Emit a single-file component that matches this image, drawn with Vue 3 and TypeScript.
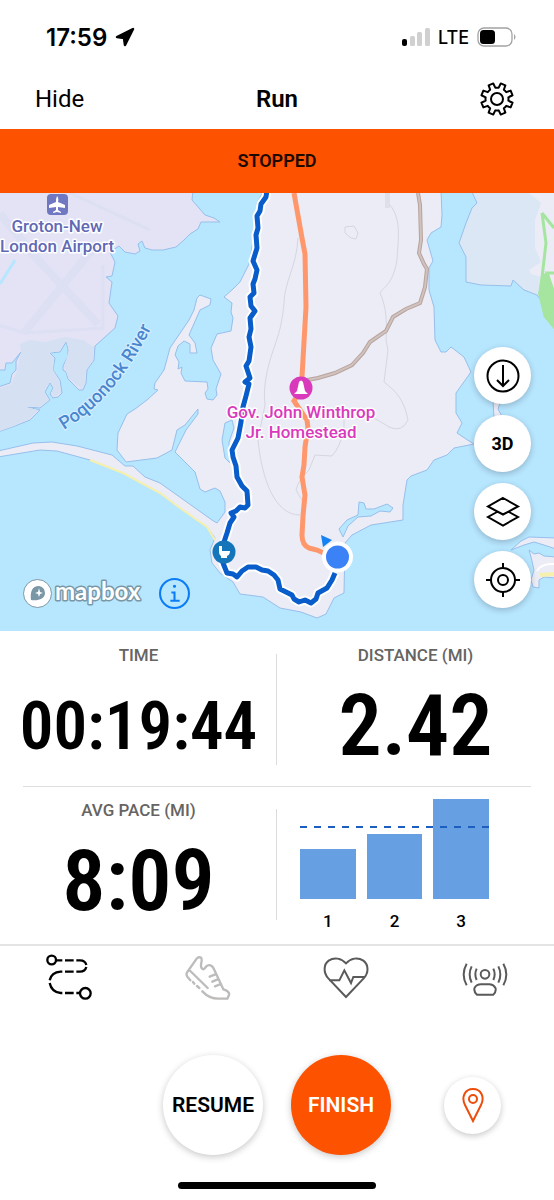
<script setup lang="ts">
interface Split {
  mile: number
  height: number
}

const splits: Split[] = [
  { mile: 1, height: 50 },
  { mile: 2, height: 65 },
  { mile: 3, height: 100 },
]

function gearPath(teeth: number, outer: number, root: number): string {
  const point = (radius: number, degrees: number): string => {
    const a = (degrees * Math.PI) / 180
    return `${(radius * Math.sin(a)).toFixed(2)} ${(-radius * Math.cos(a)).toFixed(2)}`
  }
  const step = 360 / teeth
  const parts: string[] = []
  for (let i = 0; i < teeth; i++) {
    const a = step / 2 + i * step
    parts.push(
      `${i ? `A${root} ${root} 0 0 1 ` : 'M'}${point(root, a - 14)}`,
      `L${point(outer, a - 9)}`,
      `L${point(outer, a + 9)}`,
      `L${point(root, a + 14)}`,
    )
  }
  return parts.join(' ') + 'Z'
}

const gear = gearPath(8, 16, 11.5)
</script>

<template>
  <main class="screen">
    <div class="status">
      <div class="status-side">
        <span class="clock">17:59</span>
        <svg class="arrow" viewBox="0 0 20 20" aria-hidden="true">
          <path d="M18 2L10 18L9 11L2 10Z" fill="#000" stroke="#000" stroke-width="2.500" stroke-linejoin="round" />
        </svg>
      </div>
      <div class="status-side">
        <svg class="signal" viewBox="0 0 28 18" aria-hidden="true">
          <rect x="0" y="11" width="5" height="7" rx="2" fill="#000" />
          <rect x="8" y="8" width="5" height="10" rx="1.500" fill="#d0d0d0" />
          <rect x="15" y="4" width="5" height="14" rx="1.500" fill="#d0d0d0" />
          <rect x="23" y="0" width="5" height="18" rx="1.500" fill="#d0d0d0" />
        </svg>
        <span class="network">LTE</span>
        <svg class="battery" viewBox="0 0 40 20" aria-hidden="true">
          <rect x="1" y="1" width="34" height="18" rx="6" fill="none" stroke="#a3a3a3" stroke-width="1.300" />
          <rect x="3" y="3" width="15" height="14" rx="3.500" fill="#000" />
          <path d="M37 7 Q40 10 37 13Z" fill="#a3a3a3" />
        </svg>
      </div>
    </div>

    <header class="nav">
      <button class="hide">Hide</button>
      <h1>Run</h1>
      <button class="settings" aria-label="Settings">
        <svg viewBox="-18 -18 36 36" fill="none" stroke="#000" stroke-width="2" stroke-linejoin="round">
          <path :d="gear" />
          <circle r="6" />
        </svg>
      </button>
    </header>

    <div class="banner" role="status">STOPPED</div>

    <section class="map" aria-label="Map">
      <svg class="canvas" viewBox="0 193 554 438" preserveAspectRatio="xMidYMid slice">
        <rect x="0" y="193" width="554" height="438" fill="#b7e6ff" />
        <g stroke="#97bfec" stroke-width="1" stroke-linejoin="round">
          <path fill="#e4e3f6" d="M-2 190H193L192 200L199 208L205 215L214 218L220 222L210 222L201 222L198 229L190 234L184 240L176 247L163 250L152 250L145 248L142 241L138 244L140 251L135 254L125 252L119 246L110 252L115 262L112 276L106 277L112 282L109 303L118 316L115 328L95 346L94 360L87 370L86 383L83 390L79 390L68 379L66 372L63 370L63 366L68 356L68 349L66 342L60 352L50 353L55 358L53 370L60 380L62 393L58 397L53 398L50 394L53 388L50 383L45 392L50 400L40 408L27 407L40 410L30 420L15 426L-2 432V387L10 383L12 374L16 370L16 361L21 352L12 363L6 363L5 370L-2 370Z" />
          <path fill="#ebecf5" d="M264 190L257 203L255 230L249 264L240 282L233 289L224 297L232 303L231 312L233 318L231 331L217 334L211 348L213 360L221 374L216 389L217 395L213 400L207 399L205 393L208 389L207 382L185 381L181 373L182 367L178 369L179 362L175 355L178 346L184 341L190 344L190 353L197 353L195 343L189 335L200 310L210 305L211 299L200 295L197 298L194 310L189 320L170 348L164 370L155 383L154 389L158 390L147 400L135 409L127 414L118 433L117 450L126 462L157 458L172 450L177 430L185 425L198 409L198 414L186 430L175 452L195 472L200 489L205 492L215 488L220 491L225 502L225 512L217 523L212 520L160 483L145 477L133 466L125 466L112 455L77 446L52 442L33 443L-2 451V457L40 450L57 451L90 460L123 473L160 493L180 508L207 527L215 538L210 550L212 563L220 573L233 582L240 594L263 597L280 608L301 612L317 618L326 614L334 598L344 593L345 543L352 535L371 525L403 520L403 505L407 480L411 476L427 470L434 460L447 455L454 448L474 444L466 439L457 433L462 423L456 413V393L471 372L464 357L451 347L446 352L441 352L435 340L434 307L429 290V268L433 261L427 240L431 233L441 227L442 215L441 190Z" />
          <path fill="#dbe7f4" d="M471 190L477 203L472 208L466 223L459 243L466 257V282L481 285L511 286L513 280L524 290L537 295L543 303L545 317L556 330V190Z" />
          <path fill="#ebecf5" d="M493 400H501L498 409L503 418H494Z" />
          <path fill="#ebecf5" d="M511 550L521 541L529 537L556 538V549L544 545L534 542L524 545Z" />
          <path fill="#ebecf5" d="M529 550L534 554L539 553L544 556L556 557V578L544 577L539 580V588L533 587L531 580L534 570L531 557Z" />
        </g>
        <path fill="#ebecf5" d="M529 193L541 203L535 220V248L541 262L529 270L531 274L542 277L539 292L544 301L546 316L555 328V193Z" />
        <path fill="#d5e1f3" d="M21 352L20 344L30 340L45 342L65 337L83 340L94 347L93 361L86 370L85 383L82 389L69 379L64 367L69 350L66 341L59 351L49 353L54 358L53 370L59 380L61 393L54 397L51 393L54 388L50 382L44 392L49 400L40 407L26 407L38 410L29 419L14 426L0 431V388L11 384L17 371Z" />

        <g fill="none" stroke="#dddff3" stroke-width="8">
          <path d="M95 246L24 333M25 246L98 324M0 214L40 262" />
          <path d="M-2 325L25 333L103 328V265M70 193L150 230" stroke-width="3" />
          <path d="M15 260L0 284" stroke="#b7e6ff" stroke-width="3" />
        </g>

        <path d="M542 213L546 243L540 295L545 316L554 327V293L547 273H554M542 213L554 228" fill="none" stroke="#a5e5a0" stroke-width="3" />
        <path d="M542 273L549 274L554 293V328L545 317L543 302L538 294Z" fill="#a5e5a0" />
        <path d="M90 460L123 473L160 493L180 508L207 527L215 540" fill="none" stroke="#f6f0ae" stroke-width="2" />
        <path d="M537 571Q541 563 554 564" fill="none" stroke="#fff" stroke-width="2" />
        <path d="M540 575L554 574" fill="none" stroke="#f6f0ae" stroke-width="4" />

        <g fill="#b7e6ff" stroke="#97bfec" stroke-width="1">
          <path d="M225 423L232 420L234 428L229 442L230 463L225 458L222 440Z" />
          <path d="M339 529L347 520L358 515L359 502L364 503L366 509L374 509L387 504L393 508L390 512L380 511L371 516L358 517L348 526L343 537Z" />
        </g>

        <g fill="none" stroke="#d5d6df" stroke-width="1">
          <path d="M298 238C297 265 284 283 284 303C282 325 279 333 274 348C266 370 263 390 265 405L258 440C262 480 275 515 300 515" />
          <path d="M390 205C402 220 398 240 397 260C393 285 383 287 380 293C387 308 387 325 386 340L388 350L384 382C397 392 404 400 408 420Q402 433 389 427C375 418 360 410 344 408L344 430Q340 447 332 456L315 455L309 470Q298 480 296 490L303 502" />
          <path d="M345 227L354 226L358 233L356 239L351 238L345 233Z" />
        </g>
        <rect x="385" y="193" width="5" height="15" fill="#dedfe9" />

        <path class="trail-edge" d="M418 193L420 205L421 240L419 253L424 264L427 269L425 287L420 303L406 309L393 317L386 331L370 342L363 353L352 365L335 373L318 378L302 381" />
        <path class="trail" d="M418 193L420 205L421 240L419 253L424 264L427 269L425 287L420 303L406 309L393 317L386 331L370 342L363 353L352 365L335 373L318 378L302 381" />

        <path d="M294 193L302 238L305 254L306 307L302 377V388L294 401L298 407L307 420L308 428L305 447L304 465L302 477L305 495L303 516L302 535Q302 545 309 548L317 550L328 555" fill="none" stroke="#ff976d" stroke-width="5" />

        <g fill="none" stroke-linejoin="round">
          <path v-for="layer in ['halo', 'route']" :key="layer" :class="layer" d="M267 190L266 197L261 204L260 211L257 216L258 228L256 235L257 248L253 261L257 270L255 279L253 284L254 293L250 297L251 306L255 311L250 318L251 329L249 337L251 347L249 361L246 366L250 378L245 382L249 384L246 396L243 407L241 422L238 438L232 450L233 457L236 466L237 477L242 486L247 491L248 505L245 508L240 507L236 511L231 513L234 517L230 523L227 533L224 542V552L223 563L227 573L233 574L237 577L242 571L248 567L256 567L262 570L268 571L274 575L278 580L280 589L286 592L292 595L294 599L299 602L305 600L311 603L316 599L318 593L327 588L332 580L335 573" />
        </g>

        <g class="airport">
          <rect x="47" y="194" width="21" height="21" rx="4" />
          <path d="M57 196Q59 198 58 202L65 205V208L58 207V210L61 212V213L57 212L53 213V212L56 210V207L49 208V205L56 202Q56 198 57 196Z" fill="#fff" />
        </g>
        <g class="place airport-label">
          <text x="57" y="232">Groton-New</text>
          <text x="57" y="252">London Airport</text>
        </g>

        <path id="river-line" d="M64 430Q120 396 157 316" fill="none" />
        <text class="river"><textPath href="#river-line">Poquonock River</textPath></text>

        <circle cx="301" cy="388" r="11.500" fill="#d93abc" />
        <path d="M299 382Q301 379 303 382L305 391L308 394H294L297 391Z" fill="#fff" />
        <g class="place homestead">
          <text x="301" y="418">Gov. John Winthrop</text>
          <text x="301" y="438">Jr. Homestead</text>
        </g>

        <circle cx="224" cy="552" r="11.500" fill="#1575bb" />
        <path d="M219 546H222V551H230Q230 555 227 556V558H221V556Q219 555 219 551Z" fill="#fff" />

        <path d="M321 535L332 540L323 547Z" fill="#1683f5" />
        <circle cx="337.500" cy="557" r="15.500" fill="#fff" />
        <circle cx="337.500" cy="557" r="11.500" fill="#3c82f7" />

        <g class="mapbox">
          <circle cx="37.500" cy="593.500" r="14" fill="#fff" stroke="#7a97a5" stroke-width="1" />
          <path d="M31 600C30 592 32 586 39 586A7 7 0 0 1 45 593C45 599 38 601 31 600Z" fill="#7a97a5" />
          <path d="M39 588L40 592L43 593L40 594L39 597L38 594L35 593L38 592Z" fill="#fff" />
          <text x="55" y="600">mapbox</text>
        </g>
      </svg>

      <a class="info" href="#attribution" aria-label="Map attribution">
        <svg viewBox="0 0 30 30" fill="none" stroke="#0a7cf5" stroke-width="2">
          <circle cx="15" cy="15" r="14" />
          <path d="M12 14H15V22M11 22H20" />
          <circle cx="15" cy="8" r="1" fill="#0a7cf5" stroke-width="1" />
        </svg>
      </a>

      <div class="tools">
        <button class="round" aria-label="Download map">
          <svg viewBox="0 0 36 36">
            <circle cx="18" cy="18" r="15.500" />
            <path d="M18 7V28M12 22L18 28L24 22" />
          </svg>
        </button>
        <button class="round">3D</button>
        <button class="round" aria-label="Map layers">
          <svg viewBox="0 0 36 36">
            <path d="M18 4L33 12.500L18 20.500L3 12.500ZM12 18L3 23L18 31.500L33 23L24 18" />
          </svg>
        </button>
        <button class="round" aria-label="Center on location">
          <svg viewBox="0 0 36 36">
            <circle cx="18" cy="18" r="12" />
            <circle cx="18" cy="18" r="5" />
            <path d="M18 1V6M18 30V35M1 18H6M30 18H35" />
          </svg>
        </button>
      </div>
    </section>

    <section class="stats" aria-label="Run stats">
      <div class="row">
        <div class="stat">
          <h2>TIME</h2>
          <p class="value time">00:19:44</p>
        </div>
        <div class="stat">
          <h2>DISTANCE (MI)</h2>
          <p class="value">2.42</p>
        </div>
      </div>
      <div class="row">
        <div class="stat">
          <h2>AVG PACE (MI)</h2>
          <p class="value">8:09</p>
        </div>
        <div class="chart" role="group" aria-label="Pace per mile">
          <div class="bars">
            <div v-for="split in splits" :key="split.mile" class="bar" :style="{ height: split.height + '%' }"></div>
            <svg class="average" aria-hidden="true">
              <line x1="0" y1="1" x2="100%" y2="1" stroke="#1c5fc0" stroke-width="2" stroke-dasharray="7 7" />
            </svg>
          </div>
          <div class="miles">
            <span v-for="split in splits" :key="split.mile">{{ split.mile }}</span>
          </div>
        </div>
      </div>
    </section>

    <nav class="tabs" aria-label="Run tools">
      <button aria-label="Route">
        <svg viewBox="138 40 138 144" fill="none" stroke="#000" stroke-width="7">
          <circle cx="155" cy="61" r="13" />
          <circle cx="256" cy="161" r="16" />
          <path d="M168 62H187M195 62H221M229 62H240Q256 62 259 76M259 82Q255 96 240 96H229M221 96H195M187 96H182Q154 98 149 122M149 130Q155 158 182 160H187M195 160H221M229 160H240" />
        </svg>
      </button>
      <button aria-label="Shoes">
        <svg viewBox="555 40 138 144" fill="none" stroke="#bdbcbb" stroke-width="7" stroke-linecap="round" stroke-linejoin="round">
          <path d="M571 122L562 111Q557 104 562 97L590 57Q595 50 603 54Q607 58 603 75Q602 87 610 89Q614 88 618 81Q626 73 635 79Q640 83 642 89L670 149Q690 155 687 166L682 177H655Q628 177 607 155M571 94L623 145M579 127L583 132M591 139L598 145M629 111L646 104M637 126L653 119M645 140L662 133" />
        </svg>
      </button>
      <button aria-label="Heart rate">
        <svg viewBox="147 40 138 144" fill="none" stroke="#5b5a59" stroke-width="6">
          <path d="M216 172L163 116C147 99 149 74 164 63C180 52 202 55 216 71C230 55 252 52 268 63C284 75 285 99 269 116ZM165 122H196L211 92L231 130L238 112H272" />
        </svg>
      </button>
      <button aria-label="Live tracking">
        <svg viewBox="563 40 138 144" fill="none" stroke="#5b5a59" stroke-width="6">
          <circle cx="632" cy="104" r="13" />
          <path d="M608 165H657Q667 155 663 144Q657 134 645 134H620Q607 134 601 144Q597 155 608 165ZM607 87Q599 104 607 121M592 80Q580 104 592 129M577 72Q559 104 577 137M657 87Q665 104 657 121M672 80Q684 104 672 129M687 72Q705 104 687 137" />
        </svg>
      </button>
    </nav>

    <footer class="controls">
      <div class="main-actions">
        <button class="action">RESUME</button>
        <button class="action finish">FINISH</button>
      </div>
      <button class="round pin" aria-label="Share location">
        <svg viewBox="0 0 36 36">
          <path d="M18 34L10 18C6 10 10 2 18 2S30 10 26 18Z" />
          <circle cx="18" cy="12" r="4" />
        </svg>
      </button>
    </footer>
    <div class="home"></div>
  </main>
</template>

<style>
body {
  margin: 0;
  background: #fff;
}
</style>

<style scoped>
.screen {
  display: flex;
  flex-direction: column;
  min-height: 100vh;
  background: #fff;
  color: #000;
  font-family: Roboto, "Liberation Sans", sans-serif;
}

button {
  margin: 0;
  padding: 0;
  border: 0;
  background: none;
  color: inherit;
  font: inherit;
}

svg {
  display: block;
}

h1,
h2,
p {
  margin: 0;
}

.status {
  display: flex;
  align-items: center;
  justify-content: space-between;
  height: 62px;
  padding: 6px 37px 0 46px;
}

.status-side {
  display: flex;
  align-items: center;
  gap: 8px;
  font-family: Inter, sans-serif;
}

.clock {
  font-size: 24px;
  font-weight: 600;
}

.arrow {
  width: 20px;
  height: 20px;
}

.signal {
  width: 28px;
  height: 18px;
}

.network {
  font-size: 18px;
  font-weight: 500;
}

.battery {
  width: 40px;
  height: 20px;
}

.nav {
  display: grid;
  grid-template-columns: 1fr auto 1fr;
  align-items: center;
  height: 61px;
  padding: 0 35px;
  font-size: 24px;
}

.hide {
  justify-self: start;
}

.nav h1 {
  font-size: 24px;
  font-weight: 600;
}

.settings {
  justify-self: end;
}

.settings svg {
  width: 44px;
  height: 36px;
}

.banner {
  padding: 20px;
  background: #fd5200;
  color: #1c0900;
  font-size: 18px;
  line-height: 24px;
  font-weight: 600;
  text-align: center;
}

.map {
  position: relative;
}

.canvas {
  width: 100%;
  height: 438px;
}

.halo {
  stroke: #fff;
  stroke-width: 9px;
}

.route {
  stroke: #095dcb;
  stroke-width: 5px;
}

.trail-edge {
  fill: none;
  stroke: #b9a39d;
  stroke-width: 4px;
}

.trail {
  fill: none;
  stroke: #cfc2bf;
  stroke-width: 2px;
}

.airport rect {
  fill: #6f78c0;
}

.place {
  font-size: 17px;
  font-weight: 500;
  text-anchor: middle;
  stroke: #fff;
  stroke-width: 3px;
  stroke-linejoin: round;
  paint-order: stroke;
}

.airport-label {
  fill: #6169b5;
}

.homestead {
  fill: #d93abc;
}

.river {
  fill: #4a86cf;
  font-size: 18px;
  font-weight: 500;
  stroke: #d9f1ff;
  stroke-width: 2px;
  paint-order: stroke;
}

.mapbox text {
  fill: #fff;
  font-family: Lato, sans-serif;
  font-size: 24px;
  font-weight: 700;
  stroke: #7a97a5;
  stroke-width: 3px;
  stroke-linejoin: round;
  paint-order: stroke;
}

.info {
  position: absolute;
  bottom: 22px;
  left: 159px;
}

.info svg {
  width: 31px;
  height: 31px;
}

.tools {
  position: absolute;
  top: 154px;
  right: 23px;
  display: grid;
  gap: 11px;
}

.round {
  display: grid;
  place-items: center;
  width: 57px;
  height: 57px;
  border-radius: 50%;
  background: #fff;
  box-shadow: 0 2px 6px rgb(0 0 0 / 22%);
  font-size: 18px;
  font-weight: 700;
}

.round svg {
  width: 36px;
  height: 36px;
  fill: none;
  stroke: #000;
  stroke-width: 2px;
}

.stats {
  border-bottom: 2px solid #e4e4e4;
}

.row {
  display: grid;
  grid-template-columns: 1fr 1fr;
  position: relative;
  height: 155px;
}

.row + .row {
  height: 158px;
}

.row + .row::before {
  content: "";
  position: absolute;
  top: 0;
  right: 23px;
  left: 23px;
  height: 1px;
  background: #dedede;
}

.row::after {
  content: "";
  position: absolute;
  top: 23px;
  left: 50%;
  width: 1px;
  height: 111px;
  margin-left: -1px;
  background: #dcdcdc;
}

.stat {
  display: flex;
  flex-direction: column;
  align-items: center;
  padding-top: 12px;
}

.stat h2 {
  color: #666462;
  font-size: 17px;
  line-height: 24px;
  font-weight: 500;
}

.value {
  font-family: "Roboto Condensed", "Liberation Sans Narrow", Roboto, sans-serif;
  font-size: 86px;
  line-height: 118px;
  font-weight: 600;
}

.time {
  font-size: 67px;
}

.chart {
  padding: 13px 65px 0 23px;
}

.bars {
  position: relative;
  display: flex;
  align-items: flex-end;
  gap: 11px;
  height: 100px;
}

.bar {
  flex: 1;
  background: #669fe2;
}

.average {
  position: absolute;
  top: 27px;
  left: 0;
  width: 100%;
  height: 2px;
}

.miles {
  display: flex;
  gap: 11px;
  margin-top: 11px;
  font-size: 17px;
  line-height: 22px;
  font-weight: 500;
  text-align: center;
}

.miles span {
  flex: 1;
}

.tabs {
  display: grid;
  grid-template-columns: repeat(4, 1fr);
  padding-top: 7px;
}

.tabs button {
  display: grid;
  place-items: center;
}

.tabs svg {
  width: 46px;
  height: 48px;
}

.controls {
  display: grid;
  grid-template-columns: 1fr auto 1fr;
  align-items: center;
  margin-top: 54px;
}

.main-actions {
  grid-column: 2;
  display: flex;
  gap: 28px;
}

.action {
  width: 100px;
  height: 100px;
  border-radius: 50%;
  background: #fff;
  box-shadow: 0 2px 7px rgb(0 0 0 / 22%);
  font-size: 21px;
  font-weight: 600;
}

.finish {
  background: #fd5200;
  color: #fff;
}

.pin {
  justify-self: center;
}

.pin svg {
  stroke: #ed4c0b;
}

.home {
  width: 198px;
  height: 7px;
  margin: 27px auto 11px;
  border-radius: 4px;
  background: #000;
}
</style>
